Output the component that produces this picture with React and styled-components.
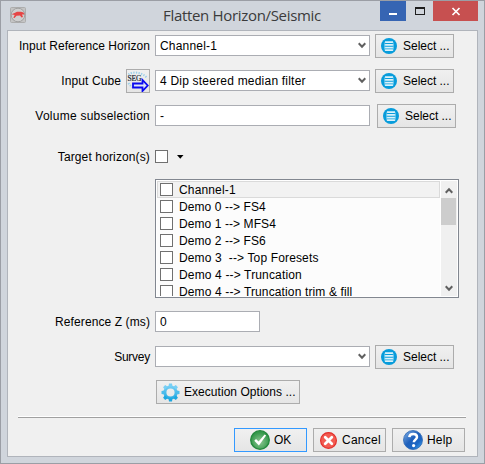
import React from 'react';
import styled, { createGlobalStyle } from 'styled-components';

const Global = createGlobalStyle`
  * { box-sizing: border-box; }
  body { margin: 0; font: 12px/16px "Liberation Sans", Arial, sans-serif; color: #000; }
`;

const Window = styled.div`
  width: 485px; height: 464px;
  display: flex; flex-direction: column;
  background: #d0d5dc;
  border: 1px solid #9b9ea5;
  padding: 0 6px 6px;
`;
const TitleBar = styled.header`
  height: 29px; flex: none;
  display: flex; align-items: flex-start;
  padding-left: 3px;
`;
const AppIcon = styled.svg`width: 16px; height: 16px; margin-top: 6px; flex: none;`;
const Title = styled.h1`
  margin: 3px 0 0; padding-left: 137px; width: 319px; flex: none;
  font: 400 15px/23px "Open Sans", "Noto Sans", sans-serif;
  letter-spacing: -0.32px; color: #3b3b3b; white-space: nowrap;
`;
const Caption = styled.div`
  width: ${p => p.$w}px; height: 20px; flex: none;
  margin-left: ${p => p.$ml || 0}px;
  background: ${p => p.$bg || 'transparent'};
  svg { display: block; }
`;
const Body = styled.main`
  flex: 1; min-height: 0;
  border: 1px solid #b0b4bb;
  background: #f0f0f0;
  padding-top: 3px;
  display: flex; flex-direction: column;
`;
const Row = styled.div`
  display: flex; align-items: flex-start; flex: none;
  height: ${p => p.$h || 24}px;
  margin-bottom: 11px;
`;
const LabelCell = styled.div`
  width: 147px; flex: none; padding-right: 5px;
  display: flex; justify-content: flex-end; align-items: flex-start; gap: 5px;
`;
const Text = styled.span`
  line-height: 16px; white-space: pre;
  margin-top: ${p => p.$mt ?? 4}px;
  letter-spacing: ${p => p.$ls || 0}px;
`;
const Field = styled.div`
  width: ${p => p.$w || 215}px; height: 21px; margin-top: 1px; flex: none;
  border: 1px solid #abadb3; background: #fff;
  padding: 0 3px 0 4px;
  display: flex; justify-content: space-between;
  ${Text} { margin-top: 2px; }
  svg { margin: 6px 0 0; }
`;
const Button = styled.button`
  width: ${p => p.$w}px; height: 24px; flex: none;
  margin: 0 0 0 ${p => p.$ml || 0}px;
  padding: 0 0 0 ${p => p.$pl}px;
  border: 1px solid ${p => (p.$primary ? '#3399ff' : '#acacac')};
  background: linear-gradient(#f0f0f0, #e5e5e5);
  color: #000; font: inherit; text-align: left;
  display: flex; align-items: center;
  gap: ${p => p.$gap ?? 6}px;
  svg { flex: none; }
  ${Text} { margin-top: 0; }
`;
const Check = styled.span`
  width: 13px; height: 13px; flex: none;
  border: 1px solid #707070; background: #fff;
`;
const TargetTools = styled.div`
  display: flex; gap: 9px; padding-top: 11px;
`;
const ListBox = styled.div`
  width: 304px; height: 119px; margin: 0 0 12px 147px; flex: none;
  border: 1px solid #828790; background: #fff; padding: 1px;
  display: flex;
`;
const Items = styled.ul`
  margin: 0; padding: 0; list-style: none; overflow: hidden;
  width: 283px; background: #fcfcfc;
`;
const Item = styled.li`
  height: 17px; padding-left: 2px;
  display: flex; align-items: center; gap: 6px;
  border: 1px solid ${p => (p.$current ? '#dadada' : 'transparent')};
  background: ${p => (p.$current ? '#f2f2f2' : 'transparent')};
`;
const ScrollBar = styled.div`
  width: 16px; margin-left: 1px; background: #f0f0f0;
  display: flex; flex-direction: column; align-items: center;
`;
const Thumb = styled.div`
  width: 15px; height: 27px; margin: 0 auto auto 0; background: #cdcdcd;
`;
const ArrowBox = styled.div`
  height: 17px; padding: 2px 1px 0 0; display: flex; align-items: center;
`;
const Rule = styled.hr`
  width: 448px; height: 2px; margin: 1px 0 10px 10px; flex: none;
  border: 0; border-top: 1px solid #fff; background: #a0a0a0;
`;
const Footer = styled.footer`
  display: flex; justify-content: flex-end; gap: 6px; padding-right: 12px;
`;

const Chevron = ({ up }) => (
  <svg width="8" height="7" viewBox="0 0 8 7">
    <path d={up ? 'M.7 5.7 4 2.3l3.3 3.400' : 'M.7 1.3 4 4.700l3.300-3.400'} fill="none" stroke="#606060" strokeWidth="2.100" />
  </svg>
);

const ListIcon = () => (
  <svg width="16" height="16" viewBox="0 0 16 16">
    <circle cx="8" cy="8" r="8" fill="#079cdb" />
    <path d="M4 4.200h8M3.500 6.900h9M3.500 9.600h9M4 12.200h8" stroke="#dcf2fb" strokeWidth="1.700" />
    <path d="M3.700 4v8.500M12.300 4v8.500" stroke="#6bc6ea" strokeWidth=".7" />
  </svg>
);

const GearIcon = () => (
  <svg width="19" height="19" viewBox="0 0 19 19">
    <defs>
      <linearGradient id="gear" x1="0" y1="0" x2="0" y2="19" gradientUnits="userSpaceOnUse">
        <stop offset="0" stopColor="#86d6f8" /><stop offset="1" stopColor="#12a2de" />
      </linearGradient>
    </defs>
    <circle cx="9.500" cy="9.500" r="5.600" fill="none" stroke="url(#gear)" strokeWidth="3" />
    {[0, 45, 90, 135, 180, 225, 270, 315].map(a => (
      <path key={a} d="M7.500 3.500 8 .5h3l.5 3z" fill={a > 90 && a < 270 ? '#1ca7e0' : a === 90 || a === 270 ? '#4cbcec' : '#78cff5'} transform={`rotate(${a} 9.500 9.500)`} />
    ))}
  </svg>
);

const OkIcon = () => (
  <svg width="20" height="20" viewBox="0 0 20 20">
    <defs>
      <radialGradient id="ok" cx=".5" cy=".6" r=".5">
        <stop offset="0" stopColor="#8fc795" /><stop offset="1" stopColor="#35994b" />
      </radialGradient>
    </defs>
    <circle cx="10" cy="10" r="9.300" fill="url(#ok)" stroke="#24883e" strokeWidth="1.300" />
    <path d="m4.300 10.800 1.700-1.700 2.600 2.300 6-6.800 1.500 1-7.200 9.800z" fill="#fff" />
  </svg>
);

const CancelIcon = () => (
  <svg width="17" height="17" viewBox="0 0 17 17">
    <circle cx="8.500" cy="8.500" r="7.900" fill="#f25c52" stroke="#e3302c" strokeWidth="1.200" />
    <path d="m5.200 5.200 6.600 6.600m0-6.600-6.600 6.600" stroke="#fff" strokeWidth="2.700" strokeLinecap="round" />
  </svg>
);

const HelpIcon = () => (
  <svg width="20" height="20" viewBox="0 0 20 20">
    <defs>
      <linearGradient id="help" x1="0" y1="0" x2="1" y2="1">
        <stop offset="0" stopColor="#86b4e8" /><stop offset=".45" stopColor="#1f60bb" /><stop offset=".7" stopColor="#1c66c4" /><stop offset="1" stopColor="#4ab4f6" />
      </linearGradient>
    </defs>
    <circle cx="10" cy="10" r="9.500" fill="url(#help)" stroke="#2c67b4" strokeWidth=".8" />
    <path d="M6.300 7.200c.2-2.300 1.700-3.300 3.900-3.300 2.300 0 3.800 1.200 3.800 3.100 0 2.500-3.200 2.700-3.200 5.300" fill="none" stroke="#fff" strokeWidth="2.500" />
    <circle cx="10.600" cy="15.600" r="1.600" fill="#fff" />
  </svg>
);

const SegyIcon = () => (
  <svg width="22" height="22" viewBox="0 0 22 22">
    <path d="M1.500 4.500C5 1.500 15 1.500 20 8M1.500 13c1 2 2 3 4 4" fill="none" stroke="#9bd0ea" strokeWidth="2" strokeDasharray="1.300 1.300" />
    <text x=".5" y="11" fontFamily="Liberation Serif, serif" fontSize="7.500" fill="#1c2a36" stroke="#1c2a36" strokeWidth=".2" textLength="14">SEG</text>
    <path d="M6 13.500h9.500V10l5.200 5.500-5.200 5.500v-3.500H6z" fill="#dfe6f5" stroke="#0a0af0" strokeWidth="1.800" />
  </svg>
);

const AppLogo = () => (
  <AppIcon viewBox="0 0 16 16">
    <rect x=".5" y=".5" width="15" height="15" rx="1" fill="#c4c4c4" stroke="#adadad" />
    <circle cx="8" cy="8" r="6.800" fill="#cfcfcf" stroke="#9c9c9c" strokeWidth=".9" />
    <path d="M1.500 7.300 4.500 6l2.500-1.300 4 .1 2.500.8 1 2-2.500-.2 1 2.600-1.500.4-1.500-2-3.500.4-2 2.200-1.200-.3 1.400-2.700z" fill="#e64545" />
  </AppIcon>
);

const SelectButton = ({ ml = 5 }) => (
  <Button $w={79} $ml={ml} $pl={5}>
    <ListIcon />
    <Text $ls={-0.02}>Select ...</Text>
  </Button>
);

const horizons = [
  ['Channel-1', 0.15],
  ['Demo 0 --> FS4', 0.08],
  ['Demo 1 --> MFS4', 0.08],
  ['Demo 2 --> FS6', 0.08],
  ['Demo 3  --> Top Foresets', 0.14],
  ['Demo 4 --> Truncation', 0.15],
  ['Demo 4 --> Truncation trim & fill', 0.13],
];

export default function App() {
  return (
    <>
      <Global />
      <Window>
        <TitleBar>
          <AppLogo />
          <Title>Flatten Horizon/Seismic</Title>
          <Caption $w={26} $ml={35} $bg="#3665b3">
            <svg width="26" height="20"><rect x="9" y="12" width="8" height="2" fill="#fff" /></svg>
          </Caption>
          <Caption $w={27}>
            <svg width="27" height="20"><path d="M9 6h10v8H9zM10 8h8v5h-8z" fill="#1e1e1e" fillRule="evenodd" /></svg>
          </Caption>
          <Caption $w={45} $bg="#c75050">
            <svg width="45" height="20"><path d="m19.500 7 7 7m0-7-7 7" stroke="#fff" strokeWidth="1.700" /></svg>
          </Caption>
        </TitleBar>
        <Body>
          <Row>
            <LabelCell><Text $ls={0.04}>Input Reference Horizon</Text></LabelCell>
            <Field><Text $ls={0.2}>Channel-1</Text><Chevron /></Field>
            <SelectButton />
          </Row>
          <Row>
            <LabelCell>
              <Text $ls={0.1}>Input Cube</Text>
              <Button $w={24} $pl={0}><SegyIcon /></Button>
            </LabelCell>
            <Field><Text $ls={0.21}>4 Dip steered median filter</Text><Chevron /></Field>
            <SelectButton />
          </Row>
          <Row>
            <LabelCell><Text $ls={0.24}>Volume subselection</Text></LabelCell>
            <Field><Text>-</Text></Field>
            <SelectButton ml={7} />
          </Row>
          <Row $h={29}>
            <LabelCell><Text $mt={10} $ls={0.13}>Target horizon(s)</Text></LabelCell>
            <TargetTools>
              <Check />
              <svg width="7" height="13" viewBox="0 0 7 13"><path d="M0 5h6.500L3.250 8.700z" fill="#000" /></svg>
            </TargetTools>
          </Row>
          <ListBox>
            <Items>
              {horizons.map(([name, ls], i) => (
                <Item key={name} $current={i === 0}><Check /><Text $mt={1} $ls={ls}>{name}</Text></Item>
              ))}
            </Items>
            <ScrollBar>
              <ArrowBox><Chevron up /></ArrowBox>
              <Thumb />
              <ArrowBox><Chevron /></ArrowBox>
            </ScrollBar>
          </ListBox>
          <Row>
            <LabelCell><Text $ls={0.1}>Reference Z (ms)</Text></LabelCell>
            <Field $w={105}><Text>0</Text></Field>
          </Row>
          <Row>
            <LabelCell><Text $ls={-0.25}>Survey</Text></LabelCell>
            <Field><Text /><Chevron /></Field>
            <SelectButton />
          </Row>
          <Row>
            <Button $w={144} $ml={148} $pl={4} $gap={4}>
              <GearIcon />
              <Text $ls={0.04}>Execution Options ...</Text>
            </Button>
          </Row>
          <Rule />
          <Footer>
            <Button $w={73} $pl={15} $gap={4} $primary><OkIcon /><Text>OK</Text></Button>
            <Button $w={73} $pl={6} $gap={5}><CancelIcon /><Text $ls={0.25}>Cancel</Text></Button>
            <Button $w={73} $pl={10} $gap={4}><HelpIcon /><Text $ls={0.2}>Help</Text></Button>
          </Footer>
        </Body>
      </Window>
    </>
  );
}
